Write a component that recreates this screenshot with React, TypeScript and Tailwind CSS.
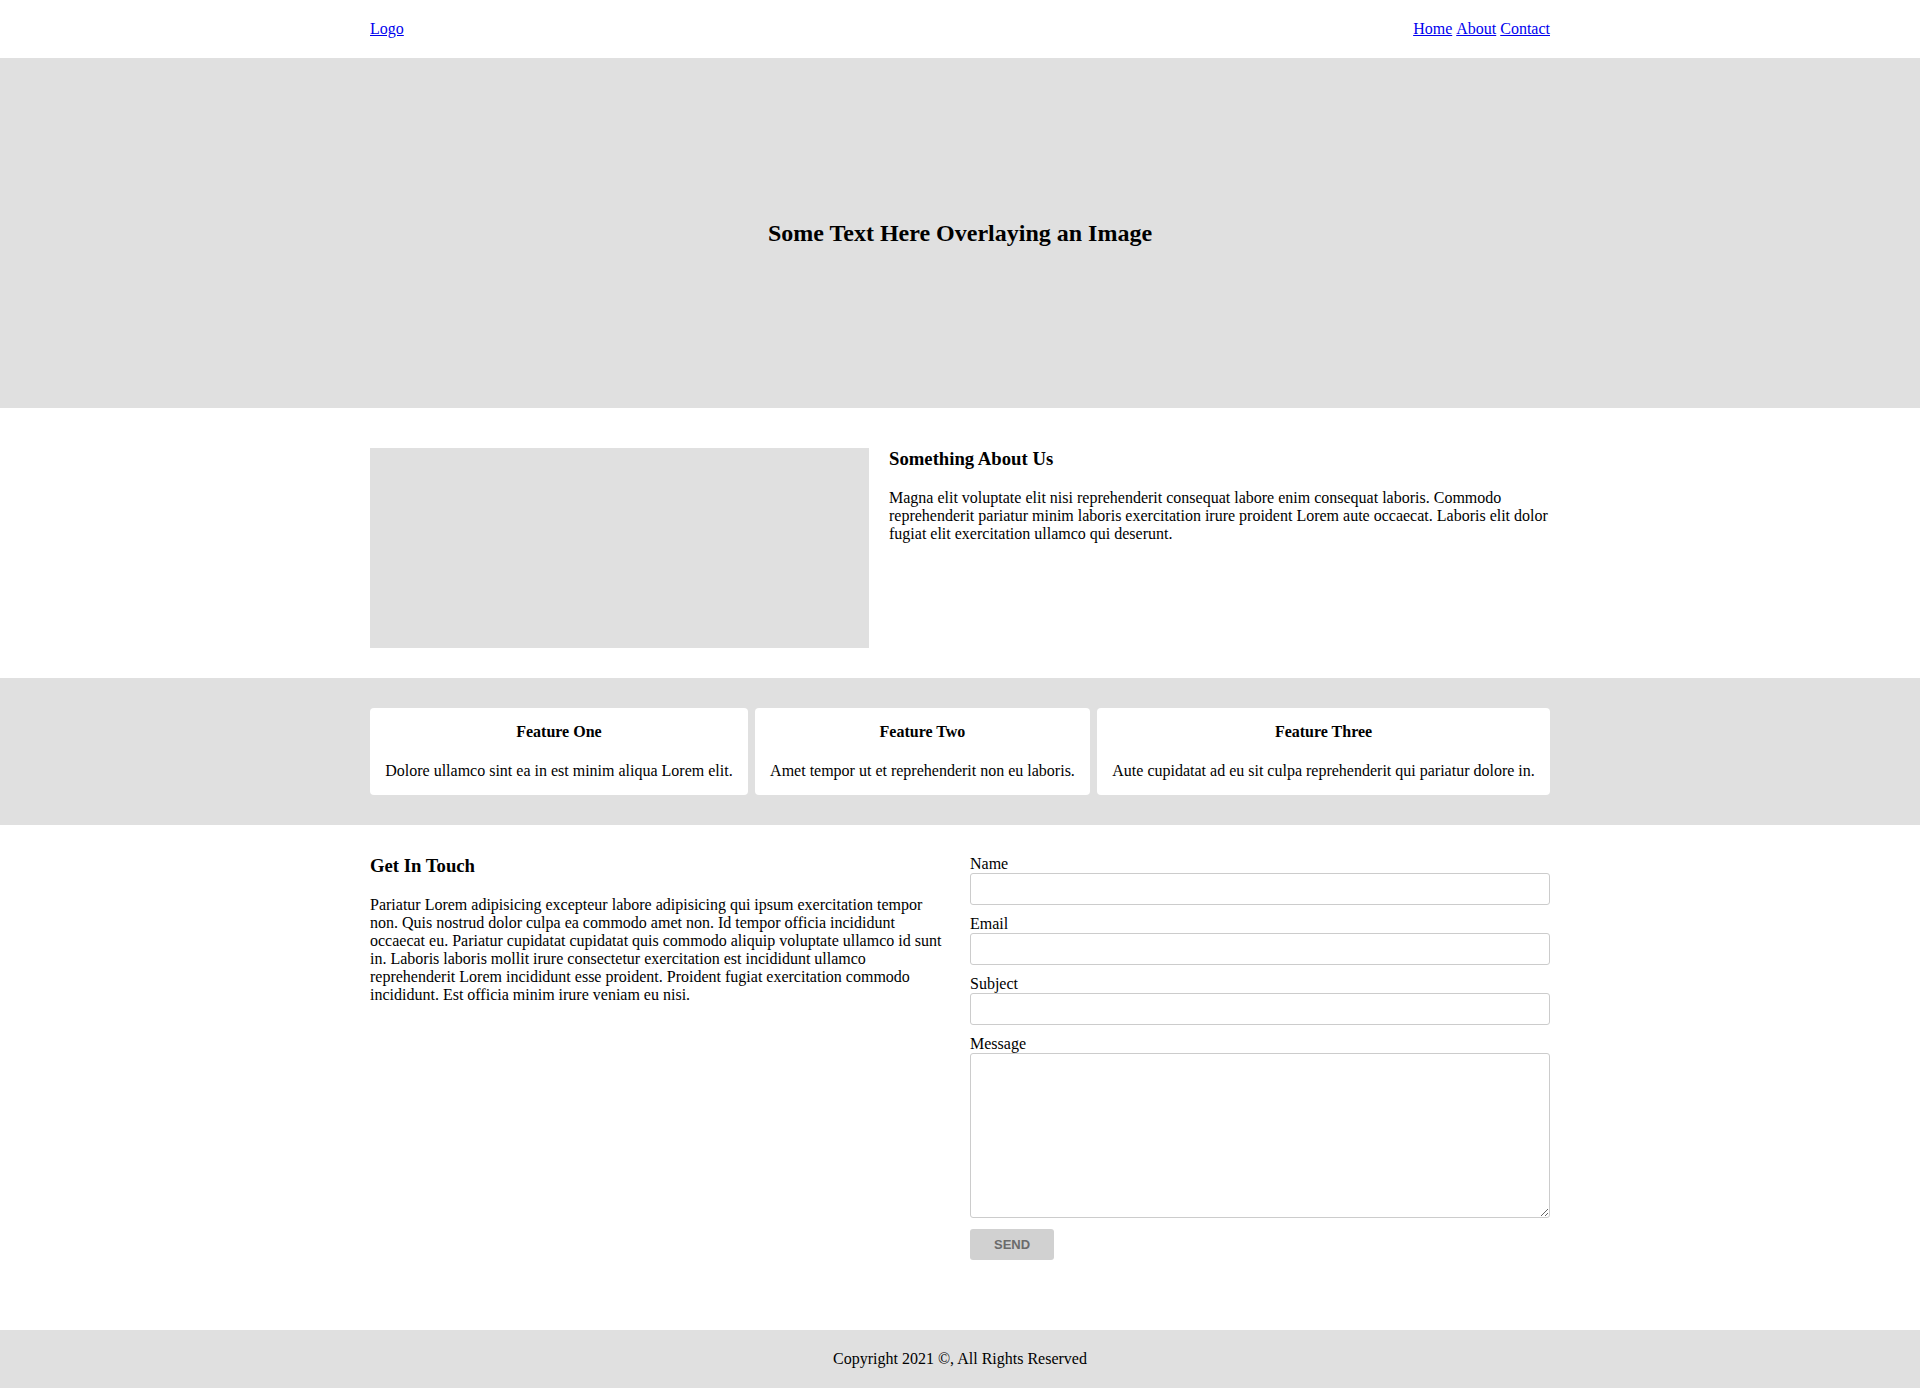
export default function App() {
  const features = [
    { title: "Feature One", text: "Dolore ullamco sint ea in est minim aliqua Lorem elit." },
    { title: "Feature Two", text: "Amet tempor ut et reprehenderit non eu laboris." },
    { title: "Feature Three", text: "Aute cupidatat ad eu sit culpa reprehenderit qui pariatur dolore in." },
  ];

  const fields = ["Name", "Email", "Subject"];

  return (
    <div className="min-h-screen bg-white text-black font-['Liberation_Serif',serif] text-[16px] leading-[normal]">
      {/* Header */}
      <header className="py-[20px]">
        <div className="w-[1180px] mx-auto flex items-center justify-between">
          <a href="#" className="text-[#0000ee] underline">Logo</a>
          <nav className="flex gap-[4px]">
            <a href="#" className="text-[#0000ee] underline">Home</a>
            <a href="#" className="text-[#0000ee] underline">About</a>
            <a href="#" className="text-[#0000ee] underline">Contact</a>
          </nav>
        </div>
      </header>

      {/* Hero */}
      <section className="h-[350px] bg-[#e0e0e0] flex items-center justify-center">
        <h2 className="text-[24px] font-bold">Some Text Here Overlaying an Image</h2>
      </section>

      {/* About */}
      <section className="pt-[40px] pb-[30px]">
        <div className="w-[1180px] mx-auto flex gap-[20px]">
          <div className="w-[499px] h-[200px] bg-[#e0e0e0] shrink-0" />
          <div className="flex-1">
            <h3 className="text-[18.72px] font-bold mb-[18.72px]">Something About Us</h3>
            <p>
              Magna elit voluptate elit nisi reprehenderit consequat labore enim consequat laboris. Commodo
              reprehenderit pariatur minim laboris exercitation irure proident Lorem aute occaecat. Laboris elit dolor
              fugiat elit exercitation ullamco qui deserunt.
            </p>
          </div>
        </div>
      </section>

      {/* Features */}
      <section className="bg-[#e0e0e0] py-[30px]">
        <div className="w-[1180px] mx-auto flex gap-[7px]">
          {features.map((f) => (
            <div key={f.title} className="flex-auto bg-white rounded-[4px] p-[15px] text-center">
              <h4 className="font-bold mb-[21px]">{f.title}</h4>
              <p>{f.text}</p>
            </div>
          ))}
        </div>
      </section>

      {/* Contact */}
      <section className="pt-[30px] pb-[70px]">
        <div className="w-[1180px] mx-auto grid grid-cols-2 gap-[20px]">
          <div>
            <h3 className="text-[18.72px] font-bold mb-[18.72px]">Get In Touch</h3>
            <p>
              Pariatur Lorem adipisicing excepteur labore adipisicing qui ipsum exercitation tempor non. Quis nostrud
              dolor culpa ea commodo amet non. Id tempor officia incididunt occaecat eu. Pariatur cupidatat cupidatat
              quis commodo aliquip voluptate ullamco id sunt in. Laboris laboris mollit irure consectetur exercitation
              est incididunt ullamco reprehenderit Lorem incididunt esse proident. Proident fugiat exercitation commodo
              incididunt. Est officia minim irure veniam eu nisi.
            </p>
          </div>
          <form className="flex flex-col" onSubmit={(e) => e.preventDefault()}>
            {fields.map((label) => (
              <div key={label} className="flex flex-col mb-[10px]">
                <label className="block">{label}</label>
                <input
                  type="text"
                  className="h-[32px] w-full border border-[#cccccc] rounded-[3px] bg-white px-[6px]"
                />
              </div>
            ))}
            <div className="flex flex-col">
              <label className="block">Message</label>
              <textarea className="h-[165px] w-full border border-[#cccccc] rounded-[3px] bg-white px-[6px]" />
            </div>
            <div className="mt-[11px]">
              <button
                type="submit"
                className="h-[31px] px-[24px] bg-[#d1d1d1] rounded-[3px] text-[#6b6b6b] text-[13px] font-bold font-['Liberation_Sans',Arial,sans-serif]"
              >
                SEND
              </button>
            </div>
          </form>
        </div>
      </section>

      {/* Footer */}
      <footer className="bg-[#e0e0e0] py-[20px] text-center">
        <p>Copyright 2021 ©, All Rights Reserved</p>
      </footer>
    </div>
  );
}
